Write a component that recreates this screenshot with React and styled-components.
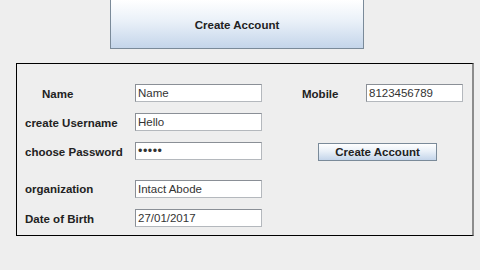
import React from "react";
import styled, { createGlobalStyle } from "styled-components";

const GlobalStyle = createGlobalStyle`
  html, body {
    margin: 0;
    padding: 0;
    background: #eeeeee;
    font-family: "Liberation Sans", Arial, sans-serif;
  }
`;

const Screen = styled.div`
  width: 480px;
  height: 270px;
  overflow: hidden;
  background: #eeeeee;
`;

const SwingButton = styled.button`
  display: flex;
  align-items: center;
  justify-content: center;
  box-sizing: border-box;
  padding: 0;
  font-family: "Liberation Sans", Arial, sans-serif;
  font-weight: bold;
  font-size: 11.5px;
  color: #222;
  border: 1px solid #7a8a99;
  background: linear-gradient(to bottom, #ffffff 0%, #e9f0f8 45%, #c4d5ea 100%);
`;

const HeaderButton = styled(SwingButton)`
  width: 254px;
  height: 50px;
  margin: -1px 0 0 110px;
  padding-top: 2px;
`;

const Panel = styled.section`
  box-sizing: border-box;
  width: 458px;
  margin: 14px 0 0 16px;
  padding: 20px 0 8px 8px;
  border: 1px solid #000;
  border-right: 2px solid #8c8c8c;
`;

const Form = styled.div`
  display: grid;
  grid-template-columns: 110px 127px 40px 64px 97px;
  grid-template-rows: 18px 18px 18px 27px 18px;
  row-gap: 11px;
`;

const Label = styled.label`
  grid-column: ${p => p.col || 1};
  grid-row: ${p => p.row};
  align-self: ${p => (p.bottom ? "end" : "center")};
  padding-left: ${p => p.indent || 0}px;
  padding-top: 2px;
  font-size: 11.5px;
  font-weight: bold;
  color: #222;
  line-height: 18px;
  white-space: nowrap;
`;

const Field = styled.input`
  grid-column: ${p => p.col || 2};
  grid-row: ${p => p.row};
  align-self: ${p => (p.bottom ? "end" : "stretch")};
  box-sizing: border-box;
  height: 18px;
  width: 100%;
  margin: 0;
  padding: 0 2px;
  border: 1px solid #8a8f96;
  border-bottom-color: #b4b8bd;
  border-right-color: #b4b8bd;
  background: #fff;
  font-family: "Liberation Sans", Arial, sans-serif;
  font-size: ${p => (p.type === "password" ? "12.5px" : "11.5px")};
  letter-spacing: ${p => (p.type === "password" ? "0.5px" : "0")};
  color: #333;
  outline: none;
`;

const FormButton = styled(SwingButton)`
  grid-column: 4 / 6;
  grid-row: 3;
  width: 119px;
  height: 18px;
  margin: 1px 0 0 16px;
`;

export default function App() {
  return (
    <Screen>
      <GlobalStyle />
      <HeaderButton>Create Account</HeaderButton>
      <Panel>
        <Form>
          <Label row={1} indent={17}>Name</Label>
          <Field row={1} defaultValue="Name" readOnly />
          <Label row={1} col={4}>Mobile</Label>
          <Field row={1} col={5} defaultValue="8123456789" readOnly />

          <Label row={2}>create Username</Label>
          <Field row={2} defaultValue="Hello" readOnly />

          <Label row={3}>choose Password</Label>
          <Field row={3} type="password" defaultValue="Hello" readOnly />
          <FormButton>Create Account</FormButton>

          <Label row={4} bottom>organization</Label>
          <Field row={4} bottom defaultValue="Intact Abode" readOnly />

          <Label row={5}>Date of Birth</Label>
          <Field row={5} defaultValue="27/01/2017" readOnly />
        </Form>
      </Panel>
    </Screen>
  );
}
